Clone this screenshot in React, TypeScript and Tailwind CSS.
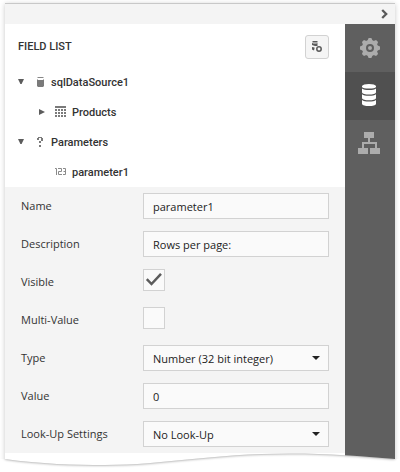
import React from "react";

const fieldClass =
  "h-[26px] w-full rounded-none border border-[#d2d2d2] bg-[#fafafa] pl-[9px] pr-2 pt-px text-[11px] leading-[23px] text-[#222] outline-none";

function Row({ id, label, children }: { id: string; label: string; children: React.ReactNode }) {
  return (
    <div className="flex h-[38px] items-start py-1.5 pl-4 pr-4">
      <label htmlFor={id} className="w-[122px] shrink-0 text-[11px] leading-[26px] text-[#333]">
        {label}
      </label>
      <div className="min-w-0 flex-1">{children}</div>
    </div>
  );
}

function TextField({ id, value }: { id: string; value: string }) {
  return <input id={id} type="text" defaultValue={value} className={fieldClass} />;
}

function SelectField({ id, value }: { id: string; value: string }) {
  return (
    <div className="relative">
      <select id={id} className={fieldClass + " block appearance-none"}>
        <option>{value}</option>
      </select>
      <svg width="8" height="4" viewBox="0 0 8 4" className="pointer-events-none absolute right-[9px] top-[11px]">
        <path d="M0 0h8L4 4z" fill="#222" />
      </svg>
    </div>
  );
}

function CheckField({ id, checked }: { id: string; checked?: boolean }) {
  return (
    <div className="relative size-[22px]">
      <input
        id={id}
        type="checkbox"
        defaultChecked={checked}
        className="peer block size-[22px] appearance-none border border-[#d2d2d2] bg-[#fafafa]"
      />
      <svg
        width="22"
        height="22"
        viewBox="0 0 22 22"
        className="pointer-events-none absolute left-0 top-0 hidden peer-checked:block"
      >
        <path d="M3.8 10.2l4.7 4.8L18 4.8" fill="none" stroke="#5c5c5c" strokeWidth="2.5" />
      </svg>
    </div>
  );
}

function OpenArrow() {
  return (
    <svg width="6" height="6" viewBox="0 0 6 6" className="shrink-0">
      <path d="M0 0h6L3.600 5H2.400z" fill="#5c5c5c" />
    </svg>
  );
}

function ClosedArrow() {
  return (
    <svg width="6" height="6" viewBox="0 0 6 6" className="shrink-0">
      <path d="M0 0l6 3-6 3z" fill="#5c5c5c" />
    </svg>
  );
}

function DatabaseGlyph() {
  return (
    <svg width="12" height="12" viewBox="0 0 12 12" fill="#7a7a7a" className="shrink-0">
      <path d="M2.500 1h6v1h-6z" opacity=".9" />
      <path d="M2 3l1 1h5l1-1v7l-1 1H3l-1-1z" />
    </svg>
  );
}

function TableGlyph() {
  return (
    <svg width="11" height="12" viewBox="0 0 11 12" fill="#7a7a7a" className="shrink-0">
      <path d="M0 0h11v2H0z" />
      {[3, 6, 9].map((y) =>
        [0, 3, 6, 9].map((x) => <rect key={`${x}-${y}`} x={x} y={y} width="2" height="2" />),
      )}
    </svg>
  );
}

function QuestionGlyph() {
  return (
    <svg width="12" height="12" viewBox="0 0 12 12" fill="#7a7a7a" className="shrink-0">
      <path d="M2 2h2v2H2zM3 1h4v1H3zM6 2h2v3H6zM4 5h2v2H4zM4 9h2v2H4z" />
    </svg>
  );
}

function NumberGlyph() {
  return (
    <svg width="11" height="8" viewBox="0 0 11 8" fill="none" stroke="#8a8a8a" className="shrink-0">
      <path d="M0 .5h1.500V7M3 .5h3.500V3.500h-3V6.500H7M8 .5h2.500v6H8M8.500 3.500h2" />
    </svg>
  );
}

function TreeRow({
  indent,
  arrow,
  icon,
  text,
}: {
  indent: boolean;
  arrow?: React.ReactNode;
  icon: React.ReactNode;
  text: string;
}) {
  return (
    <li className={"flex h-[30px] items-center " + (indent ? "pl-[34px]" : "pl-[13px]")}>
      <span className="flex w-4 shrink-0 items-center">{arrow}</span>
      <span className={"flex w-[17px] shrink-0 items-center " + (indent ? "" : "pl-px")}>{icon}</span>
      <span className="pt-0.5 font-['Roboto',sans-serif] text-[11px] font-medium leading-4 text-[#333]">{text}</span>
    </li>
  );
}

function GearIcon() {
  return (
    <svg width="20" height="20" viewBox="0 0 20 20">
      <g fill="#acacac">
        <circle cx="10" cy="10" r="8" />
        {[0, 45, 90, 135].map((a) => (
          <path key={a} d="M8.600 0h2.800l1.300 3v14l-1.300 3H8.600l-1.300-3V3z" transform={`rotate(${a} 10 10)`} />
        ))}
      </g>
      <circle cx="10" cy="10" r="3" fill="none" stroke="#5f5f5f" strokeWidth="2" />
    </svg>
  );
}

function DataIcon() {
  return (
    <svg width="14" height="22" viewBox="0 0 14 22" fill="#fff">
      <path d="M0 2Q1 0 7 0t7 2v1q-1 1.500-7 1.500T0 3z" />
      <path d="M0 4.500q2 1.500 7 1.500t7-1.500v4q-1 2-7 2t-7-2z" />
      <path d="M0 10.200q2 1.600 7 1.600t7-1.600v4q-1 2-7 2t-7-2z" />
      <path d="M0 16q2 1.600 7 1.600T14 16v4q-1 2-7 2t-7-2z" />
    </svg>
  );
}

function StructureIcon() {
  return (
    <svg width="22" height="22" viewBox="0 0 22 22" fill="#acacac">
      <path d="M6 0h10v6H6zM0 16h10v6H0zM12 16h10v6H12z" />
      <path d="M10 6h2v4h7v6h-2v-4H6v4H4v-6h6z" />
    </svg>
  );
}

export default function App() {
  return (
    <div className="relative bg-white px-[5px] pb-1 pt-[3px] font-['Open_Sans','Noto_Sans',sans-serif]">
      <main className="border-t border-[#c8c8c8] shadow-[0_1px_5px_rgba(0,0,0,0.22)]">
        <header className="flex h-5 items-center justify-end bg-[#f4f4f4] pr-[7px]">
          <button type="button" aria-label="Collapse" className="block">
            <svg width="7" height="10" viewBox="0 0 7 10" className="block">
              <path d="M1.200 1L5.200 5l-4 4" fill="none" stroke="#5a5a5a" strokeWidth="2.300" />
            </svg>
          </button>
        </header>
        <div className="flex">
          <section className="min-w-0 flex-1 bg-white pb-[15px]">
            <div className="flex h-[43px] items-start justify-between pl-[13px] pr-4 pt-[11px]">
              <h1 className="font-['Roboto',sans-serif] text-[11px] font-medium leading-6 text-[#333]">FIELD LIST</h1>
              <button
                type="button"
                aria-label="Add data source"
                className="flex size-6 items-center justify-center rounded-[3px] border border-[#d2d2d2] bg-[#f5f5f5]"
              >
                <svg width="12" height="12" viewBox="0 0 12 12" fill="#5a5a5a">
                  <path d="M1.500 0h5v1.500h-5zM1 2q3 1 5.500 0v3H4L1 4zM1 6l2.500.5v1L3 9.500 1 8.500z" />
                  <circle cx="8" cy="8" r="2.200" fill="none" stroke="#5a5a5a" strokeWidth="1.500" />
                </svg>
              </button>
            </div>
            <ul>
              <TreeRow indent={false} arrow={<OpenArrow />} icon={<DatabaseGlyph />} text="sqlDataSource1" />
              <TreeRow indent arrow={<ClosedArrow />} icon={<TableGlyph />} text="Products" />
              <TreeRow indent={false} arrow={<OpenArrow />} icon={<QuestionGlyph />} text="Parameters" />
              <TreeRow indent icon={<NumberGlyph />} text="parameter1" />
            </ul>
            <form className="bg-[#f4f4f4]">
              <Row id="name" label="Name">
                <TextField id="name" value="parameter1" />
              </Row>
              <Row id="description" label="Description">
                <TextField id="description" value="Rows per page:" />
              </Row>
              <Row id="visible" label="Visible">
                <CheckField id="visible" checked />
              </Row>
              <Row id="multi" label="Multi-Value">
                <CheckField id="multi" />
              </Row>
              <Row id="type" label="Type">
                <SelectField id="type" value="Number (32 bit integer)" />
              </Row>
              <Row id="value" label="Value">
                <TextField id="value" value="0" />
              </Row>
              <Row id="lookup" label="Look-Up Settings">
                <SelectField id="lookup" value="No Look-Up" />
              </Row>
            </form>
          </section>
          <nav className="w-[50px] shrink-0 bg-[#5f5f5f]">
            <button type="button" aria-label="Properties" className="flex h-12 w-full items-center justify-center">
              <GearIcon />
            </button>
            <button
              type="button"
              aria-label="Field list"
              className="flex h-12 w-full items-center justify-center bg-[#505050] pb-0.5 pr-0.5"
            >
              <DataIcon />
            </button>
            <button
              type="button"
              aria-label="Report explorer"
              className="flex h-12 w-full items-center justify-center pb-0.5 pr-0.5"
            >
              <StructureIcon />
            </button>
          </nav>
        </div>
      </main>
      <svg
        aria-hidden="true"
        viewBox="0 0 400 22"
        preserveAspectRatio="none"
        className="absolute bottom-0 left-0 h-[22px] w-full"
      >
        <defs>
          <filter id="soft" x="-5%" y="-60%" width="110%" height="220%">
            <feGaussianBlur stdDeviation="1.800" />
          </filter>
          <clipPath id="below">
            <path d="M0 9H5C40 14 75 15 105 15C165 15 210 3.500 290 3.500C330 3.500 360 6 395 9H400V22H0z" />
          </clipPath>
        </defs>
        <g clipPath="url(#below)">
          <path d="M0 0H400V22H0z" fill="#fff" />
          <path
            d="M5 -6V9C40 14 75 15 105 15C165 15 210 3.500 290 3.500C330 3.500 360 6 395 9V-6z"
            fill="#000"
            opacity=".5"
            filter="url(#soft)"
          />
        </g>
      </svg>
    </div>
  );
}
